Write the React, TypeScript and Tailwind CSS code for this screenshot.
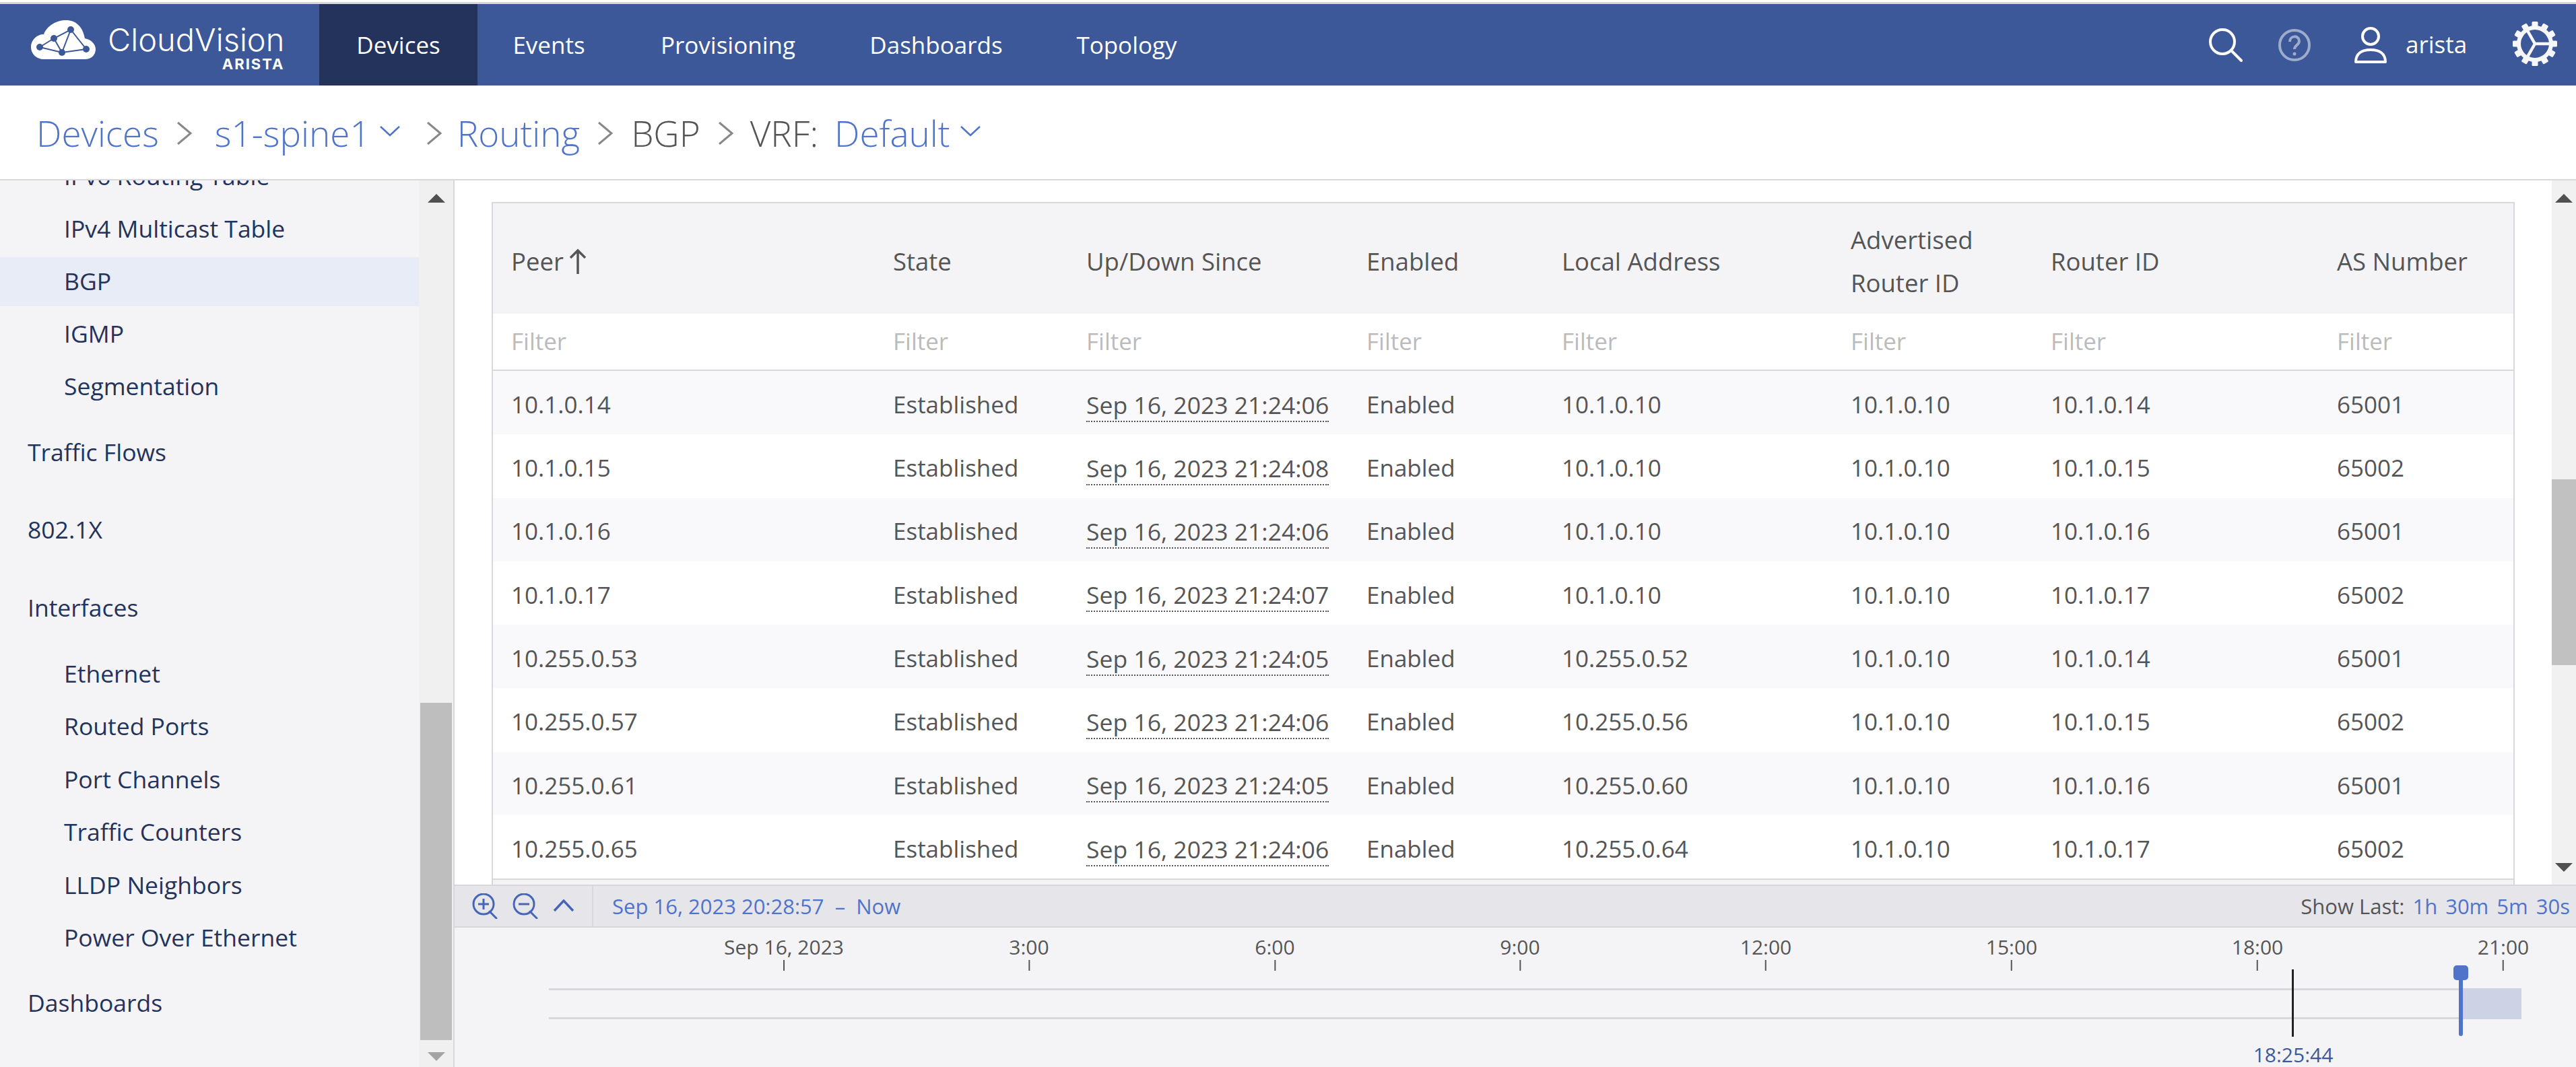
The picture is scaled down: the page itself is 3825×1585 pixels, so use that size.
const font = 'font-["Open_Sans",sans-serif]';

const navItems = [
  { label: 'Devices', width: 'w-[235px]', active: true },
  { label: 'Events', width: 'w-[212px]' },
  { label: 'Provisioning', width: 'w-[320px]' },
  { label: 'Dashboards', width: 'w-[298px]' },
  { label: 'Topology', width: 'w-[268px]' },
];

const sideItems = [
  { label: 'IPv6 Routing Table', className: 'h-[78px] pl-[95px]' },
  { label: 'IPv4 Multicast Table', className: 'h-[78px] pl-[95px]' },
  { label: 'BGP', className: 'h-[73px] my-[2.5px] pl-[95px] bg-[#e8ecf6]' },
  { label: 'IGMP', className: 'h-[78px] pl-[95px]' },
  { label: 'Segmentation', className: 'h-[78px] pl-[95px]' },
  { label: 'Traffic Flows', className: 'h-[116px] pl-[41px] pt-[1px]' },
  { label: '802.1X', className: 'h-[116px] pl-[41px]' },
  { label: 'Interfaces', className: 'h-[116px] pl-[41px]' },
  { label: 'Ethernet', className: 'h-[78.5px] pl-[95px]' },
  { label: 'Routed Ports', className: 'h-[78.5px] pl-[95px]' },
  { label: 'Port Channels', className: 'h-[78.5px] pl-[95px]' },
  { label: 'Traffic Counters', className: 'h-[78.5px] pl-[95px]' },
  { label: 'LLDP Neighbors', className: 'h-[78.5px] pl-[95px]' },
  { label: 'Power Over Ethernet', className: 'h-[78.5px] pl-[95px]' },
  { label: 'Dashboards', className: 'h-[116px] pl-[41px]' },
];

const headers = ['State', 'Up/Down Since', 'Enabled', 'Local Address', 'Advertised Router ID', 'Router ID', 'AS Number'];

const rows = [
  ['10.1.0.14', 'Sep 16, 2023 21:24:06', '10.1.0.10', '10.1.0.14', '65001'],
  ['10.1.0.15', 'Sep 16, 2023 21:24:08', '10.1.0.10', '10.1.0.15', '65002'],
  ['10.1.0.16', 'Sep 16, 2023 21:24:06', '10.1.0.10', '10.1.0.16', '65001'],
  ['10.1.0.17', 'Sep 16, 2023 21:24:07', '10.1.0.10', '10.1.0.17', '65002'],
  ['10.255.0.53', 'Sep 16, 2023 21:24:05', '10.255.0.52', '10.1.0.14', '65001'],
  ['10.255.0.57', 'Sep 16, 2023 21:24:06', '10.255.0.56', '10.1.0.15', '65002'],
  ['10.255.0.61', 'Sep 16, 2023 21:24:05', '10.255.0.60', '10.1.0.16', '65001'],
  ['10.255.0.65', 'Sep 16, 2023 21:24:06', '10.255.0.64', '10.1.0.17', '65002'],
];

const ticks = [
  { label: 'Sep 16, 2023', x: 'left-[489px]' },
  { label: '3:00', x: 'left-[853px]' },
  { label: '6:00', x: 'left-[1218px]' },
  { label: '9:00', x: 'left-[1582px]' },
  { label: '12:00', x: 'left-[1947px]' },
  { label: '15:00', x: 'left-[2312px]' },
  { label: '18:00', x: 'left-[2677px]' },
  { label: '21:00', x: 'left-[3042px]' },
];

const gridCols = 'grid grid-cols-[568px_285px_418px_290px_429px_295px_425px_292px]';

// column paddings, same order as the grid above
const cellPad = ['pl-[27px]', 'pl-[26px]', 'pl-[28px]', 'pl-[26px]', 'pl-[26px]', 'pl-[26px]', 'pl-[28px]', 'pl-[28px]'];

function Logo() {
  return (
    <svg width="96" height="58" viewBox="0 0 96 58" className="shrink-0 -mt-[15px]">
      <path
        d="M19 58 C8 58 0 50 0 40 C0 29 9 21 19 21 C24 8 38 0 52 0 C67 0 77 10 80 27 C90 29 96 36 96 43 C96 52 89 58 80 58 Z"
        fill="#fff"
      />
      <path
        d="M13 40 L34 27 L59 14 L46 48 L34 27 M59 14 L82 43 L46 48 L13 40"
        stroke="#3c5899"
        strokeWidth="2"
        fill="none"
      />
      <g fill="#3c5899">
        <circle cx="59" cy="14" r="5" />
        <circle cx="34" cy="27" r="5" />
        <circle cx="13" cy="40" r="5" />
        <circle cx="46" cy="48" r="5" />
        <circle cx="82" cy="43" r="5" />
      </g>
    </svg>
  );
}

function Gear() {
  const teeth = Array.from({ length: 12 }, (_, i) => i * 30);
  return (
    <svg width="68" height="68" viewBox="0 0 68 68" className="-mt-[3px]">
      <g fill="#f7f7fa">
        {teeth.map((a) => (
          <rect key={a} x="29.5" y="1" width="9" height="12" rx="1.5" transform={`rotate(${a} 34 34)`} />
        ))}
      </g>
      <circle cx="34" cy="34" r="24" fill="none" stroke="#f7f7fa" strokeWidth="6" />
      <path d="M34 34 L58 34 M34 34 L22 13 M34 34 L22 55" stroke="#f7f7fa" strokeWidth="4.5" />
    </svg>
  );
}

function ZoomIcon({ minus }: { minus?: boolean }) {
  return (
    <svg width="38" height="38" viewBox="0 0 38 38" fill="none" stroke="#4566b8" strokeWidth="3">
      <circle cx="17" cy="16" r="15" />
      <path d="M26 27 L36 37" strokeLinecap="round" />
      <path d={minus ? 'M9 16 H25' : 'M9 16 H25 M17 8 V24'} />
    </svg>
  );
}

function Triangle({ up, color }: { up?: boolean; color: string }) {
  return (
    <svg width="26" height="13" viewBox="0 0 26 13" fill={color}>
      <path d={up ? 'M13 0 L26 13 H0 Z' : 'M0 0 H26 L13 13 Z'} />
    </svg>
  );
}

function Crumb({ className }: { className: string }) {
  return (
    <svg width="23" height="34" viewBox="0 0 23 34" fill="none" stroke="#888" strokeWidth="3" className={`shrink-0 ${className}`}>
      <path d="M2 1 L21 17 L2 33" />
    </svg>
  );
}

function Caret({ className }: { className: string }) {
  return (
    <svg width="30" height="16" viewBox="0 0 30 16" fill="none" stroke="#5074c9" strokeWidth="2.5" className={`shrink-0 -mt-[6px] ${className}`}>
      <path d="M1 1 L15 14 L29 1" />
    </svg>
  );
}

export default function App() {
  return (
    <div className={`${font} h-[1585px] w-[3825px] overflow-hidden bg-white flex flex-col text-[35px] text-[#555]`}>
      <div className="h-[3px] bg-white" />
      <div className="h-[3px] bg-[#d8d8dc]" />
      <header className="h-[121px] shrink-0 bg-[#3c5899] flex items-center text-white">
        <div className="w-[474px] h-full flex items-center pl-[46px] gap-[18px]">
          <Logo />
          <div className="flex flex-col items-end mt-[8px] font-['Inter',sans-serif]">
            <span className="text-[47px] font-light leading-[46px]">CloudVision</span>
            <span className="text-[22px] font-bold leading-[20px] tracking-[2px] mt-[3px]">ARISTA</span>
          </div>
        </div>
        {navItems.map((item) => (
          <div
            key={item.label}
            className={`h-full flex items-center justify-center pt-[2px] ${item.width} ${item.active ? 'bg-[#24335c]' : ''}`}
          >
            {item.label}
          </div>
        ))}
        <div className="ml-auto flex items-center pr-[27px]">
          <svg width="50" height="50" viewBox="0 0 50 50" fill="none" stroke="#fff" strokeWidth="4">
            <circle cx="20" cy="20" r="18" />
            <path d="M33 33 L48 48" strokeLinecap="round" />
          </svg>
          <svg width="48" height="48" viewBox="0 0 48 48" fill="none" className="ml-[53px] opacity-50">
            <circle cx="24" cy="24" r="22" stroke="#fff" strokeWidth="4" />
            <path d="M17 19 C17 9 31 9 31 18 C31 24 24 24 24 30" stroke="#fff" strokeWidth="4" />
            <circle cx="24" cy="37" r="2.5" fill="#fff" />
          </svg>
          <svg width="48" height="54" viewBox="0 0 48 54" fill="none" stroke="#fff" strokeWidth="4" className="ml-[65px]">
            <circle cx="24" cy="14" r="12" />
            <path d="M2 52 C2 40 10 34 24 34 C38 34 46 40 46 52 Z" strokeLinejoin="round" />
          </svg>
          <span className="ml-[28px] w-[158px]">arista</span>
          <Gear />
        </div>
      </header>
      <div className="h-[139px] shrink-0 flex items-center pl-[54px] pt-[3px] text-[53px] font-light text-[#5074c9]">
        <span>Devices</span>
        <Crumb className="ml-[26px]" />
        <span className="ml-[34px]">s1-spine1</span>
        <Caret className="ml-[14px]" />
        <Crumb className="ml-[39px]" />
        <span className="ml-[23px]">Routing</span>
        <Crumb className="ml-[26px]" />
        <span className="ml-[27px] text-[#555]">BGP</span>
        <Crumb className="ml-[26px]" />
        <span className="ml-[25px] text-[#555]">VRF:</span>
        <span className="ml-[24px]">Default</span>
        <Caret className="ml-[15px]" />
      </div>
      <div className="h-[2px] shrink-0 bg-[#d8d8dc]" />
      <div className="flex-1 flex min-h-0">
        <aside className="w-[675px] shrink-0 flex border-r-2 border-[#d8d8dc] bg-[#f4f4f7]">
          <div className="w-[622px] overflow-hidden text-[#24335c] text-[35.5px]">
            <div className="-mt-[45px]">
              {sideItems.map((item) => (
                <div key={item.label} className={`flex items-center ${item.className}`}>
                  {item.label}
                </div>
              ))}
            </div>
          </div>
          <div className="flex-1 bg-[#f0f0f0] flex flex-col items-center">
            <div className="h-[20px]" />
            <Triangle up color="#505050" />
            <div className="h-[743px]" />
            <div className="h-[501px] w-[47px] bg-[#bebebe]" />
            <div className="h-[18px]" />
            <Triangle color="#a3a3a3" />
          </div>
        </aside>
        <main className="flex-1 min-w-0 flex flex-col">
          <div className="flex h-[1046px] shrink-0">
            <div className="flex-1 overflow-hidden pl-[55px] pt-[32px] pr-[55px]">
              <div className="border-2 border-[#d8d8dc] border-b-0 h-[1014px]">
                <div className={`${gridCols} h-[164px] bg-[#f4f4f7] font-medium text-[36.5px] items-center pt-[8px]`}>
                  <div className={`${cellPad[0]} flex items-center gap-[8px]`}>
                    Peer
                    <svg width="26" height="38" viewBox="0 0 26 38" fill="none" stroke="#555" strokeWidth="3.5">
                      <path d="M13 38 V3 M2 14 L13 3 L24 14" />
                    </svg>
                  </div>
                  {headers.map((h, i) => (
                    <div key={h} className={`${cellPad[i + 1]} leading-[64px] pr-[20px]`}>
                      {h}
                    </div>
                  ))}
                </div>
                <div className={`${gridCols} h-[85px] items-center text-[#bbb] border-b-2 border-[#d8d8dc]`}>
                  {cellPad.map((pad, i) => (
                    <div key={i} className={pad}>
                      Filter
                    </div>
                  ))}
                </div>
                {rows.map((row, i) => (
                  <div
                    key={row[0]}
                    className={`${gridCols} h-[94.3px] items-center pt-[6px] ${i % 2 === 0 ? 'bg-[#f9f9fb]' : 'bg-white'}`}
                  >
                    <div className={cellPad[0]}>{row[0]}</div>
                    <div className={cellPad[1]}>Established</div>
                    <div className={`${cellPad[2]} text-[35.5px]`}>
                      <span className="border-b-2 border-dotted border-[#555]">{row[1]}</span>
                    </div>
                    <div className={cellPad[3]}>Enabled</div>
                    <div className={cellPad[4]}>{row[2]}</div>
                    <div className={cellPad[5]}>10.1.0.10</div>
                    <div className={cellPad[6]}>{row[3]}</div>
                    <div className={cellPad[7]}>{row[4]}</div>
                  </div>
                ))}
                <div className="h-[2px] bg-[#d8d8dc]" />
                <div className="h-[8px] bg-[#f4f4f7]" />
              </div>
            </div>
            <div className="w-[36px] shrink-0 bg-[#f1f1f1] flex flex-col items-center">
              <div className="h-[20px]" />
              <Triangle up color="#505050" />
              <div className="h-[411px]" />
              <div className="h-[276px] w-full bg-[#c1c1c1]" />
              <div className="h-[294px]" />
              <Triangle color="#505050" />
            </div>
          </div>
          <div className="h-[2px] shrink-0 bg-[#d8d8dc]" />
          <div className="h-[60px] shrink-0 bg-[#e6e6ea] flex items-center text-[31px]">
            <div className="w-[206px] h-full border-r-2 border-[#d8d8dc] flex items-center pl-[26px] gap-[22px]">
              <ZoomIcon />
              <ZoomIcon minus />
              <svg width="32" height="18" viewBox="0 0 32 18" fill="none" stroke="#4566b8" strokeWidth="3.5" className="-mt-[2px]">
                <path d="M2 17 L16 2 L30 17" />
              </svg>
            </div>
            <div className="pl-[28px] text-[#5074c9]">Sep 16, 2023 20:28:57&nbsp; – &nbsp;Now</div>
            <div className="ml-auto pr-[9px] flex gap-[12px]">
              <span>Show Last:</span>
              <span className="text-[#5074c9]">1h</span>
              <span className="text-[#5074c9]">30m</span>
              <span className="text-[#5074c9]">5m</span>
              <span className="text-[#5074c9]">30s</span>
            </div>
          </div>
          <div className="h-[2px] shrink-0 bg-[#d8d8dc]" />
          <div className="relative flex-1 bg-[#f4f4f7] text-[30px]">
            {ticks.map((t) => (
              <div key={t.label} className={`absolute top-[10px] ${t.x} -translate-x-1/2 flex flex-col items-center`}>
                <span className="leading-[38px] whitespace-nowrap">{t.label}</span>
                <span className="w-[2px] h-[16px] bg-[#555]" />
              </div>
            ))}
            <div className="absolute left-[140px] top-[90px] w-[2929px] h-[46px] border-y-[3px] border-[#d8d8dc]" />
            <div className="absolute left-[2980px] top-[90px] w-[89px] h-[46px] bg-[#cdd3e4]" />
            <div className="absolute left-[2728px] top-[62px] w-[3px] h-[100px] bg-[#222]" />
            <div className="absolute left-[2968px] top-[56px] w-[22px] h-[22px] rounded-[5px] bg-[#5074c9]" />
            <div className="absolute left-[2976px] top-[70px] w-[6px] h-[91px] rounded-b-full bg-[#5074c9]" />
            <div className="absolute left-[2730px] top-[174px] -translate-x-1/2 leading-[30px] text-[#3c5a9a]">18:25:44</div>
          </div>
        </main>
      </div>
    </div>
  );
}
